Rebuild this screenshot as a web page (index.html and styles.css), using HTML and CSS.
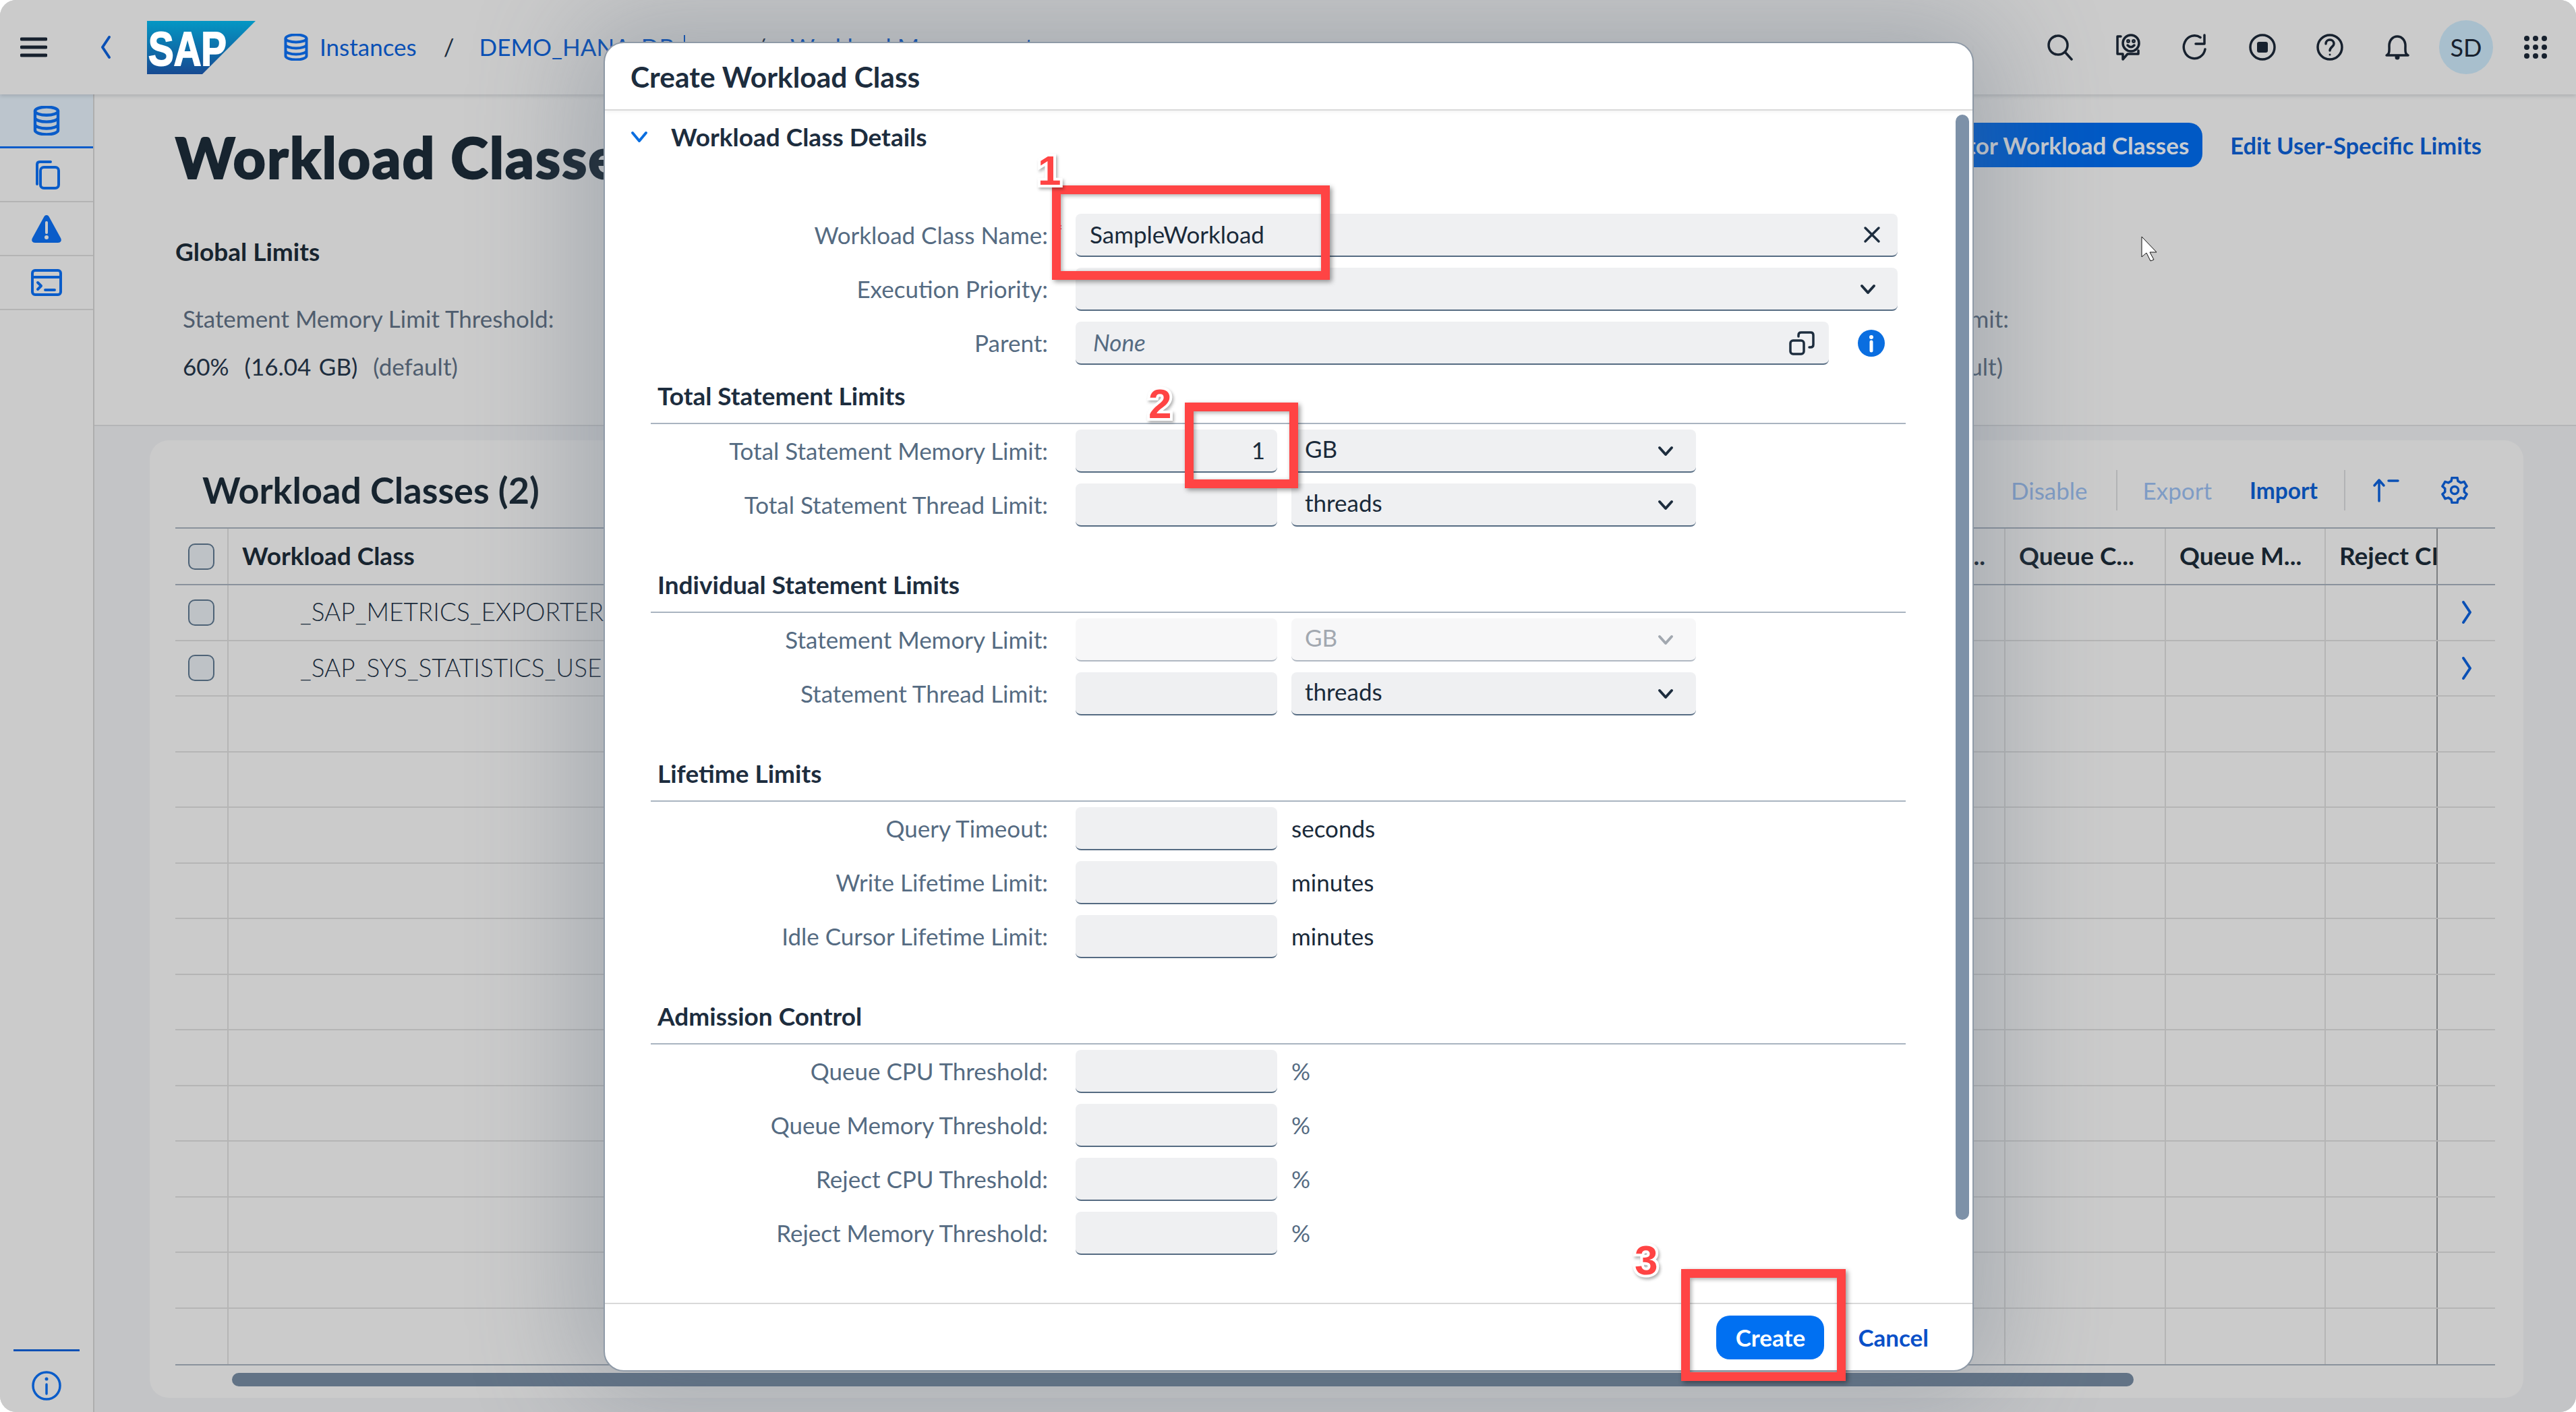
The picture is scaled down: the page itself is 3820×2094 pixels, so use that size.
FILE: index.html
```html
<!DOCTYPE html>
<html lang="en">
<head>
<meta charset="utf-8">
<title>Create Workload Class</title>
<link rel="stylesheet" href="styles.css">
</head>
<body>
<div class="app">
  <header class="shell">
    <svg class="ic-menu" viewBox="0 0 40 30"><path d="M2 3h36M2 15h36M2 27h36"/></svg>
    <svg class="ic-back" viewBox="0 0 16 36"><path d="M13 3 3 18l10 15"/></svg>
    <svg class="logo" viewBox="0 0 161 79">
      <defs><linearGradient id="sapg" x1="0" y1="0" x2="0" y2="1"><stop offset="0" stop-color="#0497c4"/><stop offset="1" stop-color="#174a92"/></linearGradient></defs>
      <polygon points="0,0 161,0 82,79 0,79" fill="url(#sapg)"/>
      <text class="logo-text" x="2" y="66" textLength="116" lengthAdjust="spacingAndGlyphs">SAP</text>
    </svg>
    <nav class="crumbs">
      <svg class="ic-db" viewBox="0 0 36 40"><use href="#db"/></svg>
      <a class="crumb first">Instances</a><span class="sep">/</span>
      <a class="crumb">DEMO_HANA_DB</a><span class="caret"></span><span class="sep wide">/</span>
      <a class="crumb">Workload Management</a>
      <svg class="ic-crumb-chev" viewBox="0 0 24 16"><path d="M3 3l9 10 9-10"/></svg>
    </nav>
    <div class="shell-tools">
      <svg class="tool" viewBox="0 0 40 40"><circle cx="17" cy="17" r="14"/><path d="M27 27l10 11"/></svg>
      <svg class="tool" viewBox="0 0 40 40"><path d="M10 4H5v26h8v8l7-8h16v-5M5 30"/><circle cx="25" cy="14" r="12"/><circle cx="21" cy="11" r="1.2"/><circle cx="29" cy="11" r="1.2"/><path d="M20 17c3 3.500 7 3.500 10 0"/></svg>
      <svg class="tool" viewBox="0 0 40 40"><path d="M35 23A16 17 0 1 1 28 5.500"/><path d="M34 2v13H21"/></svg>
      <svg class="tool" viewBox="0 0 40 40"><circle cx="20" cy="20" r="18"/><rect class="solid" x="12" y="12" width="16" height="16" rx="3"/></svg>
      <svg class="tool" viewBox="0 0 40 40"><circle cx="20" cy="20" r="18"/><path d="M14 15c0-8 12-8 12 0 0 4-6 5-6 10"/><circle class="solid" cx="20" cy="31" r="1.500"/></svg>
      <svg class="tool" viewBox="0 0 40 40"><path d="M4 32c5-2 4-8 4-14C8 10 13 4 20 4s12 6 12 14c0 6-1 12 4 14z"/><circle class="solid" cx="20" cy="35" r="3.500"/></svg>
      <div class="avatar">SD</div>
      <svg class="tool grid-ic" viewBox="0 0 36 36"><circle cx="5" cy="5" r="4"/><circle cx="18" cy="5" r="4"/><circle cx="31" cy="5" r="4"/><circle cx="5" cy="18" r="4"/><circle cx="18" cy="18" r="4"/><circle cx="31" cy="18" r="4"/><circle cx="5" cy="31" r="4"/><circle cx="18" cy="31" r="4"/><circle cx="31" cy="31" r="4"/></svg>
    </div>
  </header>

  <svg class="defs" width="0" height="0">
    <symbol id="db" viewBox="0 0 36 40"><ellipse cx="18" cy="7" rx="15.500" ry="5.500"/><path d="M2.500 7v26c0 3 7 5.500 15.500 5.500S33.500 36 33.500 33V7M2.500 16c0 3 7 5.500 15.500 5.500S33.500 19 33.500 16M2.500 25c0 3 7 5.500 15.500 5.500S33.500 28 33.500 25"/></symbol>
  </svg>

  <div class="body">
    <aside class="rail">
      <a class="rail-item active"><svg class="rail-ic" viewBox="0 0 36 40"><use href="#db"/></svg></a>
      <a class="rail-item"><svg class="rail-ic" viewBox="0 0 40 44"><path d="M6 36V7q0-4 4-4h16"/><rect x="11" y="11" width="27" height="31" rx="5"/></svg></a>
      <a class="rail-item"><svg class="rail-ic" viewBox="0 0 46 42"><path class="fill" d="M23 1c2 0 3 1 4 3l17 31c2 4 0 7-4 7H6c-4 0-6-3-4-7L19 4c1-2 2-3 4-3z"/><path class="notch" d="M23 12v15"/><circle class="dot" cx="23" cy="34" r="3"/></svg></a>
      <a class="rail-item"><svg class="rail-ic" viewBox="0 0 46 40"><rect x="2" y="2" width="42" height="36" rx="4"/><path d="M2 12h42M10 20l5 5-5 5M21 31h14"/></svg></a>
      <div class="rail-end">
        <div class="rail-rule"></div>
        <svg class="rail-info" viewBox="0 0 46 46"><circle cx="23" cy="23" r="20"/><path d="M23 21v14"/><circle class="dot" cx="23" cy="13" r="2.500"/></svg>
      </div>
    </aside>

    <main class="main">
      <section class="obj">
        <div class="obj-top">
          <h1 class="obj-title">Workload Classes</h1>
          <div class="obj-actions">
            <button class="btn-primary">Monitor Workload Classes</button>
            <a class="link-strong">Edit User-Specific Limits</a>
          </div>
        </div>
        <h2 class="obj-sub">Global Limits</h2>
        <div class="limits">
          <dl class="limit">
            <dt>Statement Memory Limit Threshold:</dt>
            <dd>60%&nbsp; (16.04 GB)&nbsp; <span class="muted">(default)</span></dd>
          </dl>
          <dl class="limit end">
            <dt>Total Statement Memory Limit:</dt>
            <dd class="nudge">80%&nbsp; (21.39 GB)&nbsp; <span class="muted">(default)</span></dd>
          </dl>
        </div>
      </section>

      <section class="content">
        <div class="card">
          <div class="toolbar">
            <h2 class="card-title">Workload Classes (2)</h2>
            <div class="tools">
              <a class="tb-link off">Disable</a>
              <span class="tb-sep"></span>
              <a class="tb-link off">Export</a>
              <a class="tb-link on">Import</a>
              <span class="tb-sep"></span>
              <svg class="tb-ic" viewBox="0 0 40 36"><path d="M10 34V3M3 11l7-8 7 8M24 4h14"/></svg>
              <svg class="tb-ic gear" viewBox="0 0 40 40"><path d="M15.040 6.370 16.050 1.420h7.900l1.010 4.950 4.360 2.520 4.800-1.600 3.950 6.840-3.790 3.350v5.040l3.790 3.350-3.950 6.840-4.800-1.600-4.360 2.520-1.010 4.950h-7.900l-1.010-4.950-4.360-2.520-4.800 1.600-3.950-6.840 3.790-3.350v-5.040l-3.790-3.350 3.950-6.840 4.800 1.600z"/><circle cx="20" cy="20" r="5.500"/></svg>
            </div>
          </div>
          <div class="table">
            <div class="tr th">
              <div class="td"><span class="check"></span></div>
              <div class="td name">Workload Class</div>
              <div class="td tail">Write Lifetime...</div>
              <div class="td">Queue C...</div>
              <div class="td">Queue M...</div>
              <div class="td clip">Reject CPU...</div>
              <div class="td"></div>
            </div>
            <div class="tr">
              <div class="td"><span class="check"></span></div>
              <div class="td val">_SAP_METRICS_EXPORTER_USER_CLASS</div>
              <div class="td"></div><div class="td"></div><div class="td"></div><div class="td"></div>
              <div class="td go"><svg class="ic-go" viewBox="0 0 16 36"><path d="M3 3l10 15L3 33"/></svg></div>
            </div>
            <div class="tr">
              <div class="td"><span class="check"></span></div>
              <div class="td val">_SAP_SYS_STATISTICS_USER_CLASS</div>
              <div class="td"></div><div class="td"></div><div class="td"></div><div class="td"></div>
              <div class="td go"><svg class="ic-go" viewBox="0 0 16 36"><path d="M3 3l10 15L3 33"/></svg></div>
            </div>
            <div class="tr"><div class="td"></div><div class="td"></div><div class="td"></div><div class="td"></div><div class="td"></div><div class="td"></div><div class="td"></div></div>
            <div class="tr"><div class="td"></div><div class="td"></div><div class="td"></div><div class="td"></div><div class="td"></div><div class="td"></div><div class="td"></div></div>
            <div class="tr"><div class="td"></div><div class="td"></div><div class="td"></div><div class="td"></div><div class="td"></div><div class="td"></div><div class="td"></div></div>
            <div class="tr"><div class="td"></div><div class="td"></div><div class="td"></div><div class="td"></div><div class="td"></div><div class="td"></div><div class="td"></div></div>
            <div class="tr"><div class="td"></div><div class="td"></div><div class="td"></div><div class="td"></div><div class="td"></div><div class="td"></div><div class="td"></div></div>
            <div class="tr"><div class="td"></div><div class="td"></div><div class="td"></div><div class="td"></div><div class="td"></div><div class="td"></div><div class="td"></div></div>
            <div class="tr"><div class="td"></div><div class="td"></div><div class="td"></div><div class="td"></div><div class="td"></div><div class="td"></div><div class="td"></div></div>
            <div class="tr"><div class="td"></div><div class="td"></div><div class="td"></div><div class="td"></div><div class="td"></div><div class="td"></div><div class="td"></div></div>
            <div class="tr"><div class="td"></div><div class="td"></div><div class="td"></div><div class="td"></div><div class="td"></div><div class="td"></div><div class="td"></div></div>
            <div class="tr"><div class="td"></div><div class="td"></div><div class="td"></div><div class="td"></div><div class="td"></div><div class="td"></div><div class="td"></div></div>
            <div class="tr"><div class="td"></div><div class="td"></div><div class="td"></div><div class="td"></div><div class="td"></div><div class="td"></div><div class="td"></div></div>
            <div class="tr last"><div class="td"></div><div class="td"></div><div class="td"></div><div class="td"></div><div class="td"></div><div class="td"></div><div class="td"></div></div>
          </div>
          <div class="hscroll"></div>
        </div>
      </section>
    </main>
  </div>

  <svg class="cursor" viewBox="0 0 26 38"><path d="M1 1v30l7-6 6 12 5-2-6-11h10z"/></svg>

  <div class="dialog">
    <div class="dlg-head">Create Workload Class</div>
    <div class="dlg-body">
      <div class="toggle">
        <svg class="ic-toggle" viewBox="0 0 26 20"><path d="M3 4l10 12L23 4"/></svg>
        <span>Workload Class Details</span>
      </div>
      <div class="form">
        <div class="rows first-rows">
          <div class="row"><label class="lbl req">Workload Class Name:</label>
            <div class="fld full"><span class="fld-val">SampleWorkload</span><svg class="fld-ic x" viewBox="0 0 26 26"><path d="M3 3l20 20M23 3 3 23"/></svg></div></div>
          <div class="row"><label class="lbl">Execution Priority:</label>
            <div class="fld full"><svg class="fld-ic chev" viewBox="0 0 24 16"><path d="M3 3l9 10 9-10"/></svg></div></div>
          <div class="row"><label class="lbl">Parent:</label>
            <div class="fld parent"><span class="fld-val ph">None</span><svg class="fld-ic help" viewBox="0 0 38 36"><rect x="2" y="14" width="20" height="20" rx="4"/><path d="M14 8V6q0-4 4-4h14q4 0 4 4v14q0 4-4 4h-2"/></svg></div>
            <svg class="ic-info" viewBox="0 0 40 40"><circle cx="20" cy="20" r="20"/><circle class="w" cx="20" cy="11" r="3"/><path class="w-l" d="M20 18v13"/></svg></div>
        </div>

        <div class="group">
          <h3 class="group-title">Total Statement Limits</h3>
          <div class="row"><label class="lbl">Total Statement Memory Limit:</label><div class="fld short"><span class="fld-val">1</span></div>
            <div class="fld sel"><span class="fld-val">GB</span><svg class="fld-ic chev" viewBox="0 0 24 16"><path d="M3 3l9 10 9-10"/></svg></div></div>
          <div class="row"><label class="lbl">Total Statement Thread Limit:</label><div class="fld short"></div>
            <div class="fld sel"><span class="fld-val">threads</span><svg class="fld-ic chev" viewBox="0 0 24 16"><path d="M3 3l9 10 9-10"/></svg></div></div>
        </div>

        <div class="group">
          <h3 class="group-title">Individual Statement Limits</h3>
          <div class="row"><label class="lbl">Statement Memory Limit:</label><div class="fld short dis"></div>
            <div class="fld sel dis"><span class="fld-val">GB</span><svg class="fld-ic chev" viewBox="0 0 24 16"><path d="M3 3l9 10 9-10"/></svg></div></div>
          <div class="row"><label class="lbl">Statement Thread Limit:</label><div class="fld short"></div>
            <div class="fld sel"><span class="fld-val">threads</span><svg class="fld-ic chev" viewBox="0 0 24 16"><path d="M3 3l9 10 9-10"/></svg></div></div>
        </div>

        <div class="group">
          <h3 class="group-title">Lifetime Limits</h3>
          <div class="row"><label class="lbl">Query Timeout:</label><div class="fld short"></div><span class="unit">seconds</span></div>
          <div class="row"><label class="lbl">Write Lifetime Limit:</label><div class="fld short"></div><span class="unit">minutes</span></div>
          <div class="row"><label class="lbl">Idle Cursor Lifetime Limit:</label><div class="fld short"></div><span class="unit">minutes</span></div>
        </div>

        <div class="group">
          <h3 class="group-title">Admission Control</h3>
          <div class="row"><label class="lbl">Queue CPU Threshold:</label><div class="fld short"></div><span class="unit pct">%</span></div>
          <div class="row"><label class="lbl">Queue Memory Threshold:</label><div class="fld short"></div><span class="unit pct">%</span></div>
          <div class="row"><label class="lbl">Reject CPU Threshold:</label><div class="fld short"></div><span class="unit pct">%</span></div>
          <div class="row"><label class="lbl">Reject Memory Threshold:</label><div class="fld short"></div><span class="unit pct">%</span></div>
        </div>
      </div>
      <div class="vscroll"></div>
    </div>
    <div class="dlg-foot">
      <button class="btn-create">Create</button>
      <a class="btn-cancel">Cancel</a>
    </div>
  </div>

  <div class="mark box1"></div>
  <div class="mark box2"></div>
  <div class="mark box3"></div>
  <span class="step n1">1</span>
  <span class="step n2">2</span>
  <span class="step n3">3</span>
</div>
</body>
</html>
```
FILE: styles.css
```css
* { box-sizing: border-box; margin: 0; padding: 0; }
html, body { width: 3820px; height: 2094px; overflow: hidden; background: #fff; }
body { font-family: "Lato", "Noto Sans", sans-serif; font-size: 35px; color: #1a2a3a; }
a { color: inherit; text-decoration: none; }
button { font: inherit; border: 0; cursor: default; }
.defs { position: absolute; }
symbol { fill: none; stroke: #0a5cc9; stroke-width: 4; }

.app { position: relative; width: 3820px; height: 2094px; display: flex; flex-direction: column; background: #cbcbcb; border-radius: 24px; overflow: hidden; }

/* shell bar */
.shell { height: 140px; flex: none; display: flex; align-items: center; background: #cbcbcb; box-shadow: 0 2px 6px rgba(40,50,60,.2); position: relative; z-index: 2; }
.shell svg { fill: none; }
.ic-menu { width: 40px; height: 30px; margin-left: 30px; stroke: #17212e; stroke-width: 5; stroke-linecap: round; }
.ic-back { width: 16px; height: 36px; margin-left: 79px; stroke: #0a50b5; stroke-width: 4; stroke-linecap: round; stroke-linejoin: round; }
.logo { width: 161px; height: 79px; margin-left: 53px; }
.logo-text { font-family: "Liberation Sans", sans-serif; font-weight: 700; font-size: 70px; fill: #fff; stroke: #fff; stroke-width: 2; }
.crumbs { display: flex; align-items: center; margin-left: 42px; color: #0a50b5; }
.ic-db { width: 36px; height: 40px; stroke: #0a5cc9; }
.crumb.first { margin-left: 17px; }
.crumb { white-space: nowrap; padding-bottom: 3px; }
.sep { color: #1d2d3e; margin: 0 37px 0 40px; padding-bottom: 3px; }
.sep.wide { margin: 0 36px 0 104px; }
.caret { width: 2px; height: 36px; background: #0a50b5; margin-left: 14px; }
.ic-crumb-chev { width: 24px; height: 16px; margin-left: 16px; stroke: #1d2d3e; stroke-width: 4; }
.shell-tools { margin-left: auto; margin-right: 42px; display: flex; align-items: center; gap: 60px; }
.tool { width: 40px; height: 40px; stroke: #17212e; stroke-width: 3.5; stroke-linecap: round; stroke-linejoin: round; }
.tool .solid { fill: #17212e; stroke: none; }
.grid-ic { fill: #17212e !important; stroke: none; width: 36px; height: 36px; margin-left: -2px; }
.avatar { width: 80px; height: 80px; margin: 0 -13px 0 -18px; border-radius: 50%; background: #a8bfcd; display: flex; align-items: center; justify-content: center; color: #17212e; font-size: 36px; }

.body { flex: 1; display: flex; min-height: 0; }

/* left rail */
.rail { width: 140px; flex: none; display: flex; flex-direction: column; background: #cbcbcb; border-right: 2px solid #aeaeae; }
.rail-item { height: 80px; display: flex; align-items: center; justify-content: center; border-bottom: 2px solid #b4b4b4; }
.rail-item.active { background: #bcc5cd; border-bottom: 3px solid #0a5cc9; }
.rail-ic { width: 46px; height: 44px; fill: none; stroke: #0a5cc9; stroke-width: 4; stroke-linecap: round; stroke-linejoin: round; }
.rail-ic .fill { fill: #0a5cc9; stroke: none; }
.rail-ic .notch { stroke: #cbcbcb; stroke-width: 4; }
.rail-ic .dot { fill: #cbcbcb; stroke: none; }
.rail-end { margin-top: auto; padding: 0 20px 16px; display: flex; flex-direction: column; align-items: center; gap: 28px; }
.rail-rule { width: 98px; height: 3px; background: #0a50b5; }
.rail-info { width: 46px; height: 46px; fill: none; stroke: #0a5cc9; stroke-width: 3.5; stroke-linecap: round; }
.rail-info .dot { fill: #0a5cc9; stroke: none; }

.main { flex: 1; display: flex; flex-direction: column; min-width: 0; }

/* object header */
.obj { height: 492px; flex: none; padding-left: 120px; background: #cbcbcb; border-bottom: 2px solid #b4b5b7; }
.obj-top { display: flex; align-items: flex-start; padding: 42px 140px 0 0; }
.obj-title { font-size: 84px; line-height: 102px; font-weight: 900; letter-spacing: 2px; color: #17242f; -webkit-text-stroke: 2px #17242f; white-space: nowrap; }
.obj-actions { margin-left: auto; display: flex; align-items: center; gap: 41px; }
.btn-primary { height: 66px; padding: 0 20px; border-radius: 20px; background: #0059c5; color: #c8ccd2; font-weight: 700; white-space: nowrap; }
.link-strong { color: #0a4fb0; font-weight: 700; font-size: 34.500px; white-space: nowrap; }
.obj-sub { margin-top: 67px; font-size: 37px; line-height: 44px; font-weight: 700; color: #17242f; }
.limits { width: 2719px; margin-top: 55px; padding-left: 11px; display: flex; justify-content: space-between; }
.limit dt { line-height: 44px; color: #4f5d6e; }
.limit dd { line-height: 44px; margin-top: 27px; color: #1d2d3e; white-space: pre; word-spacing: 2.5px; }
.limit.end { text-align: right; }
.limit .nudge { padding-right: 9px; }
.muted { color: #4f5d6e; }

/* table section */
.content { flex: 1; min-height: 0; padding: 21px 78px 21px 82px; background: #c3c4c6; }
.card { height: 100%; padding: 0 42px 0 38px; background: #cbcbcb; border-radius: 28px; display: flex; flex-direction: column; }
.toolbar { height: 129px; flex: none; display: flex; align-items: center; padding: 18px 40px 0; }
.card-title { font-size: 54px; font-weight: 700; color: #17242f; }
.tools { margin-left: auto; display: flex; align-items: center; }
.tb-link { font-weight: 700; }
.tb-link.off { color: #7f9cc5; font-weight: 400; }
.tb-link.on { color: #0a4fb0; font-size: 33.500px; margin-left: 56px; margin-right: 39px; }
.tb-sep { width: 2px; height: 60px; background: #b2b3b5; margin: 0 38px 0 42px; }
.tb-link.on + .tb-sep { margin: 0 40px 0 0; }
.tb-ic { width: 40px; height: 36px; fill: none; stroke: #0a50b5; stroke-width: 3.5; stroke-linecap: round; stroke-linejoin: round; }
.tb-ic.gear { height: 40px; margin-left: 62px; }

.table { flex: none; border-top: 2px solid #8a929c; }
.tr { height: 82.5px; display: grid; grid-template-columns: 79px 2397px 238px 238px 237px 166px 85px; border-bottom: 2px solid #b5b5b5; }
.tr.th { height: 84px; border-bottom-color: #8a929c; font-weight: 700; font-size: 37px; color: #17242f; }
.tr.last { height: 84px; border-bottom-color: #8a929c; }
.td { border-right: 2px solid #b5b5b5; display: flex; align-items: center; padding: 0 20px 3px; overflow: hidden; white-space: nowrap; }
.td:nth-child(6) { border-right-color: #7d7f82; }
.td:last-child { border-right: 0; }
.td:first-child { padding: 0 19px; }
.tail { justify-content: flex-end; padding-right: 28px; }
.clip { padding-right: 0; }
.val { padding-left: 106px; color: #1a2a3a; font-size: 37px; font-weight: 300; }
.check { width: 39px; height: 39px; border: 2px solid #4e6377; border-radius: 10px; background: #bec2c6; }
.go { justify-content: center; padding: 0; }
.ic-go { width: 16px; height: 36px; fill: none; stroke: #0a50b5; stroke-width: 4; stroke-linecap: round; stroke-linejoin: round; }
.hscroll { width: 2820px; height: 20px; margin: 11px 0 0 84px; background: #627386; border-radius: 10px; }

/* cursor */
.cursor { position: absolute; left: 3175px; top: 350px; width: 26px; height: 38px; fill: #fff; stroke: #111; stroke-width: 1; z-index: 3; }

/* dialog */
.dialog { position: absolute; left: 895px; top: 62px; width: 2032px; height: 1972px; display: flex; flex-direction: column; background: #fff; border: 2px solid #8f9aa7; border-radius: 30px; box-shadow: 0 0 160px 40px rgba(90,105,125,.33); z-index: 5; }
.dlg-head { height: 100px; flex: none; display: flex; align-items: center; padding-left: 38px; font-size: 42.500px; font-weight: 700; color: #1d2d3e; border-bottom: 2px solid #d9d9d9; box-shadow: 0 3px 5px rgba(0,0,0,.04); }
.dlg-body { flex: 1; min-height: 0; position: relative; overflow: hidden; }
.toggle { height: 80px; display: flex; align-items: center; padding: 0 0 3px 38px; gap: 34px; font-weight: 700; font-size: 37px; color: #1d2d3e; }
.ic-toggle { width: 26px; height: 20px; fill: none; stroke: #0a6ee0; stroke-width: 4; stroke-linecap: round; stroke-linejoin: round; }
.form { padding: 73px 99px 0 68px; }
.rows { display: flex; flex-direction: column; gap: 16px; margin-bottom: 8px; }
.group { margin-bottom: 48px; display: flex; flex-direction: column; gap: 16px; }
.group-title { height: 80px; margin-bottom: -8px; padding: 0 0 3px 10px; display: flex; align-items: center; font-size: 37px; font-weight: 700; color: #1d2d3e; border-bottom: 2px solid #a9b4c0; }
.row { height: 64px; display: flex; align-items: center; }
.lbl { width: 589px; margin-right: 41px; padding-bottom: 3px; text-align: right; color: #556b82; position: relative; }
.lbl.req::after { content: "*"; position: absolute; right: -22px; top: -2px; color: #e00; font-size: 30px; }
.fld { height: 64px; display: flex; align-items: center; background: #eff0f2; border-bottom: 2px solid #556b82; border-radius: 8px; position: relative; }
.fld.full { width: 1219px; }
.fld.parent { width: 1117px; }
.fld.short { width: 299px; justify-content: flex-end; padding-right: 18px; }
.fld.sel { width: 600px; margin-left: 21px; padding-left: 20px; }
.fld.dis { background: #f7f7f8; border-bottom-color: #b0b8c2; color: #a2a8b0; }
.fld-val { color: #1a2a3a; padding-bottom: 3px; }
.fld.sel .fld-val { padding-bottom: 6px; }
.fld.full .fld-val { padding-left: 21px; }
.fld.dis .fld-val { color: #a2a8b0; }
.fld-val.ph { padding-left: 26px; font-style: italic; color: #556b82; }
.fld-ic { position: absolute; fill: none; stroke: #1d2d3e; stroke-width: 4; stroke-linecap: round; stroke-linejoin: round; }
.fld-ic.x { width: 26px; height: 26px; right: 25px; top: 18px; stroke-width: 3.5; }
.fld-ic.chev { width: 24px; height: 16px; right: 33px; top: 24px; }
.fld.dis .fld-ic.chev { stroke: #a2a8b0; }
.fld.full .fld-ic.chev { right: 32px; }
.fld-ic.help { width: 38px; height: 36px; right: 21px; top: 14px; stroke-width: 3.5; }
.ic-info { width: 40px; height: 40px; margin-left: 43px; fill: #0a6ee0; }
.ic-info .w { fill: #fff; }
.ic-info .w-l { stroke: #fff; stroke-width: 5; stroke-linecap: round; fill: none; }
.unit { margin-left: 21px; padding-bottom: 3px; color: #1a2a3a; }
.unit.pct { color: #556b82; }
.vscroll { position: absolute; left: 2003px; top: 6px; width: 20px; height: 1639px; background: #7d91a8; border-radius: 10px; }
.dlg-foot { height: 100px; flex: none; display: flex; align-items: center; justify-content: flex-end; gap: 50px; padding-right: 65px; border-top: 2px solid #d9d9d9; }
.btn-create { width: 160px; height: 65px; border-radius: 20px; background: #0070f2; color: #fff; font-weight: 700; }
.btn-cancel { color: #0a50c8; font-weight: 700; }

/* annotations */
.mark { position: absolute; border: 13px solid #ff4444; box-shadow: 3px 3px 7px rgba(0,0,0,.4), inset 2px 2px 6px rgba(0,0,0,.35); z-index: 6; }
.box1 { left: 1560px; top: 275px; width: 412px; height: 140px; }
.box2 { left: 1757px; top: 597px; width: 168px; height: 127px; }
.box3 { left: 2493px; top: 1882px; width: 244px; height: 166px; }
.step { position: absolute; z-index: 7; font-family: "Liberation Sans", sans-serif; font-weight: 700; font-size: 62px; line-height: 62px; color: #ff4444; -webkit-text-stroke: 8px #fff; paint-order: stroke fill; filter: drop-shadow(2px 3px 2px rgba(0,0,0,.3)); }
.n1 { left: 1539px; top: 222px; }
.n2 { left: 1703px; top: 568px; }
.n3 { left: 2424px; top: 1838px; }
```
